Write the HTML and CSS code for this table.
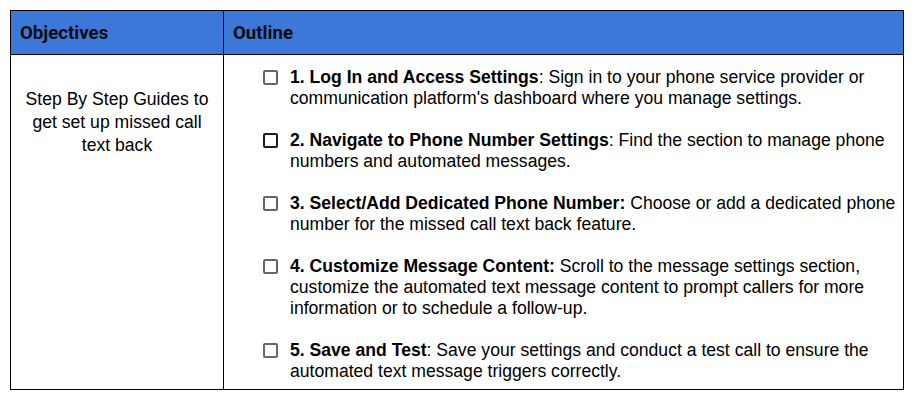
FILE: index.html
```html
<!DOCTYPE html>
<html>
<head>
<meta charset="utf-8">
<link rel="stylesheet" href="styles.css">
</head>
<body>
<table class="plan">
  <colgroup>
    <col class="col-obj">
    <col class="col-out">
  </colgroup>
  <thead>
    <tr>
      <th>Objectives</th>
      <th>Outline</th>
    </tr>
  </thead>
  <tbody>
    <tr>
      <td class="obj-cell"><p class="obj-text">Step By Step Guides to get set up missed call text back</p></td>
      <td class="out-cell">
        <ul class="checklist">
          <li class="item"><span class="box"></span><p class="item-text"><b>1. Log In and Access Settings</b>: Sign in to your phone service provider or communication platform's dashboard where you manage settings.</p></li>
          <li class="item"><span class="box dark"></span><p class="item-text"><b>2. Navigate to Phone Number Settings</b>: Find the section to manage phone numbers and automated messages.</p></li>
          <li class="item"><span class="box"></span><p class="item-text"><b>3. Select/Add Dedicated Phone Number:</b> Choose or add a dedicated phone number for the missed call text back feature.</p></li>
          <li class="item"><span class="box"></span><p class="item-text"><b>4. Customize Message Content:</b> Scroll to the message settings section, customize the automated text message content to prompt callers for more information or to schedule a follow-up.</p></li>
          <li class="item"><span class="box"></span><p class="item-text"><b>5. Save and Test</b>: Save your settings and conduct a test call to ensure the automated text message triggers correctly.</p></li>
        </ul>
      </td>
    </tr>
  </tbody>
</table>
</body>
</html>
```

FILE: styles.css
```css
html, body {
  margin: 0;
  padding: 0;
  background: #ffffff;
}
body {
  padding: 10px 0 0 10px;
  font-family: "Liberation Sans", Arial, sans-serif;
  color: #000;
}
.plan {
  border-collapse: collapse;
  width: 894px;
  table-layout: fixed;
}
.col-obj { width: 213px; }
.plan th, .plan td {
  border: 1px solid #000;
  padding: 0;
}
.plan th {
  background: #3c78d8;
  height: 43px;
  text-align: left;
  font-family: Roboto, "Liberation Sans", sans-serif;
  font-weight: 700;
  font-size: 18.67px;
  color: #0b0b0b;
  padding-left: 9px;
  vertical-align: middle;
}
.obj-cell {
  vertical-align: top;
  text-align: center;
  padding: 33px 6px 0 6px !important;
}
.obj-text {
  margin: 0;
  font-size: 17.6px;
  line-height: 23px;
}
.out-cell {
  vertical-align: top;
  padding: 12px 2px 7px 39px !important;
}
.checklist {
  list-style: none;
  margin: 0;
  padding: 0;
  display: flex;
  flex-direction: column;
  gap: 21px;
}
.item {
  display: flex;
  align-items: flex-start;
  gap: 12px;
}
.box {
  flex: none;
  box-sizing: border-box;
  width: 15px;
  height: 15px;
  border: 2px solid #666666;
  border-radius: 2px;
  margin-top: 3px;
}
.box.dark {
  border-color: #1e1e1e;
}
.item-text {
  margin: 0;
  font-size: 17.6px;
  line-height: 21px;
}
.item-text b { font-weight: 700; }
```
